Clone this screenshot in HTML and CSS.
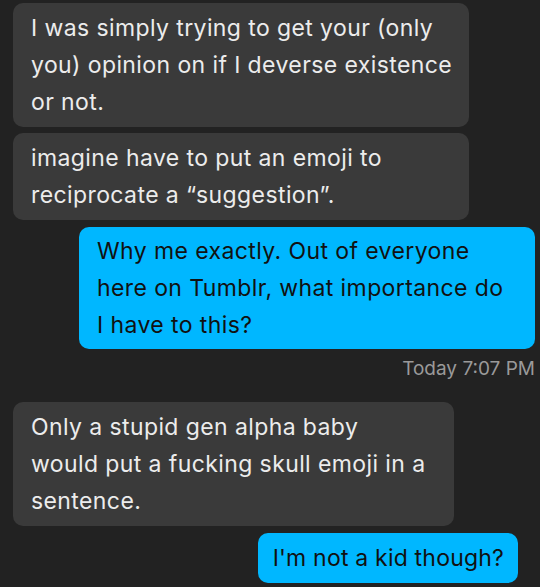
FILE: index.html
```html
<!DOCTYPE html>
<html lang="en">
<head>
  <meta charset="UTF-8" />
  <meta name="viewport" content="width=device-width, initial-scale=1.0" />
  <title>Messages</title>
  <link rel="stylesheet" href="styles.css">
</head>
<body>
  <div class="chat">
    <div class="bubble them wide">I was simply trying to get your (only<br>you) opinion on if I deverse existence<br>or not.</div>
    <div class="bubble them wide">imagine have to put an emoji to<br>reciprocate a “suggestion”.</div>
    <div class="bubble me wide first">Why me exactly. Out of everyone<br>here on Tumblr, what importance do<br>I have to this?</div>
    <div class="time">Today 7:07 PM</div>
    <div class="bubble them mid">Only a stupid gen alpha baby<br>would put a fucking skull emoji in a<br>sentence.</div>
    <div class="bubble me short">I'm not a kid though?</div>
  </div>
</body>
</html>
```

FILE: styles.css
```css
body {
  margin: 0;
  background-color: #222222;
  font-family: Inter, "Noto Sans", sans-serif;
}

.chat {
  display: flex;
  flex-direction: column;
  gap: 6px;
  padding-top: 3px;
  height: 587px;
  box-sizing: border-box;
}

.bubble {
  box-sizing: border-box;
  font-size: 23px;
  line-height: 37px;
  letter-spacing: 0.4px;
  padding: 7px 18px 6px;
  border-radius: 10px;
  white-space: nowrap;
}

.them {
  align-self: flex-start;
  margin-left: 13px;
  background-color: #3a3a3a;
  color: #ececec;
}

.me {
  align-self: flex-end;
  margin-right: 5px;
  background-color: #00b7ff;
  color: #111111;
}

.first {
  margin-top: 1px;
  padding-top: 6px;
  padding-bottom: 5px;
}

.wide { width: 456px; }
.mid { width: 441px; }

.short {
  margin-top: 1px;
  margin-right: 22px;
  padding: 7px 14px 6px 15px;
  letter-spacing: 0.2px;
}

.time {
  align-self: flex-end;
  margin-right: 5px;
  margin-top: 2px;
  margin-bottom: 16px;
  font-size: 19px;
  line-height: 23px;
  color: #9a9a9a;
}
```
